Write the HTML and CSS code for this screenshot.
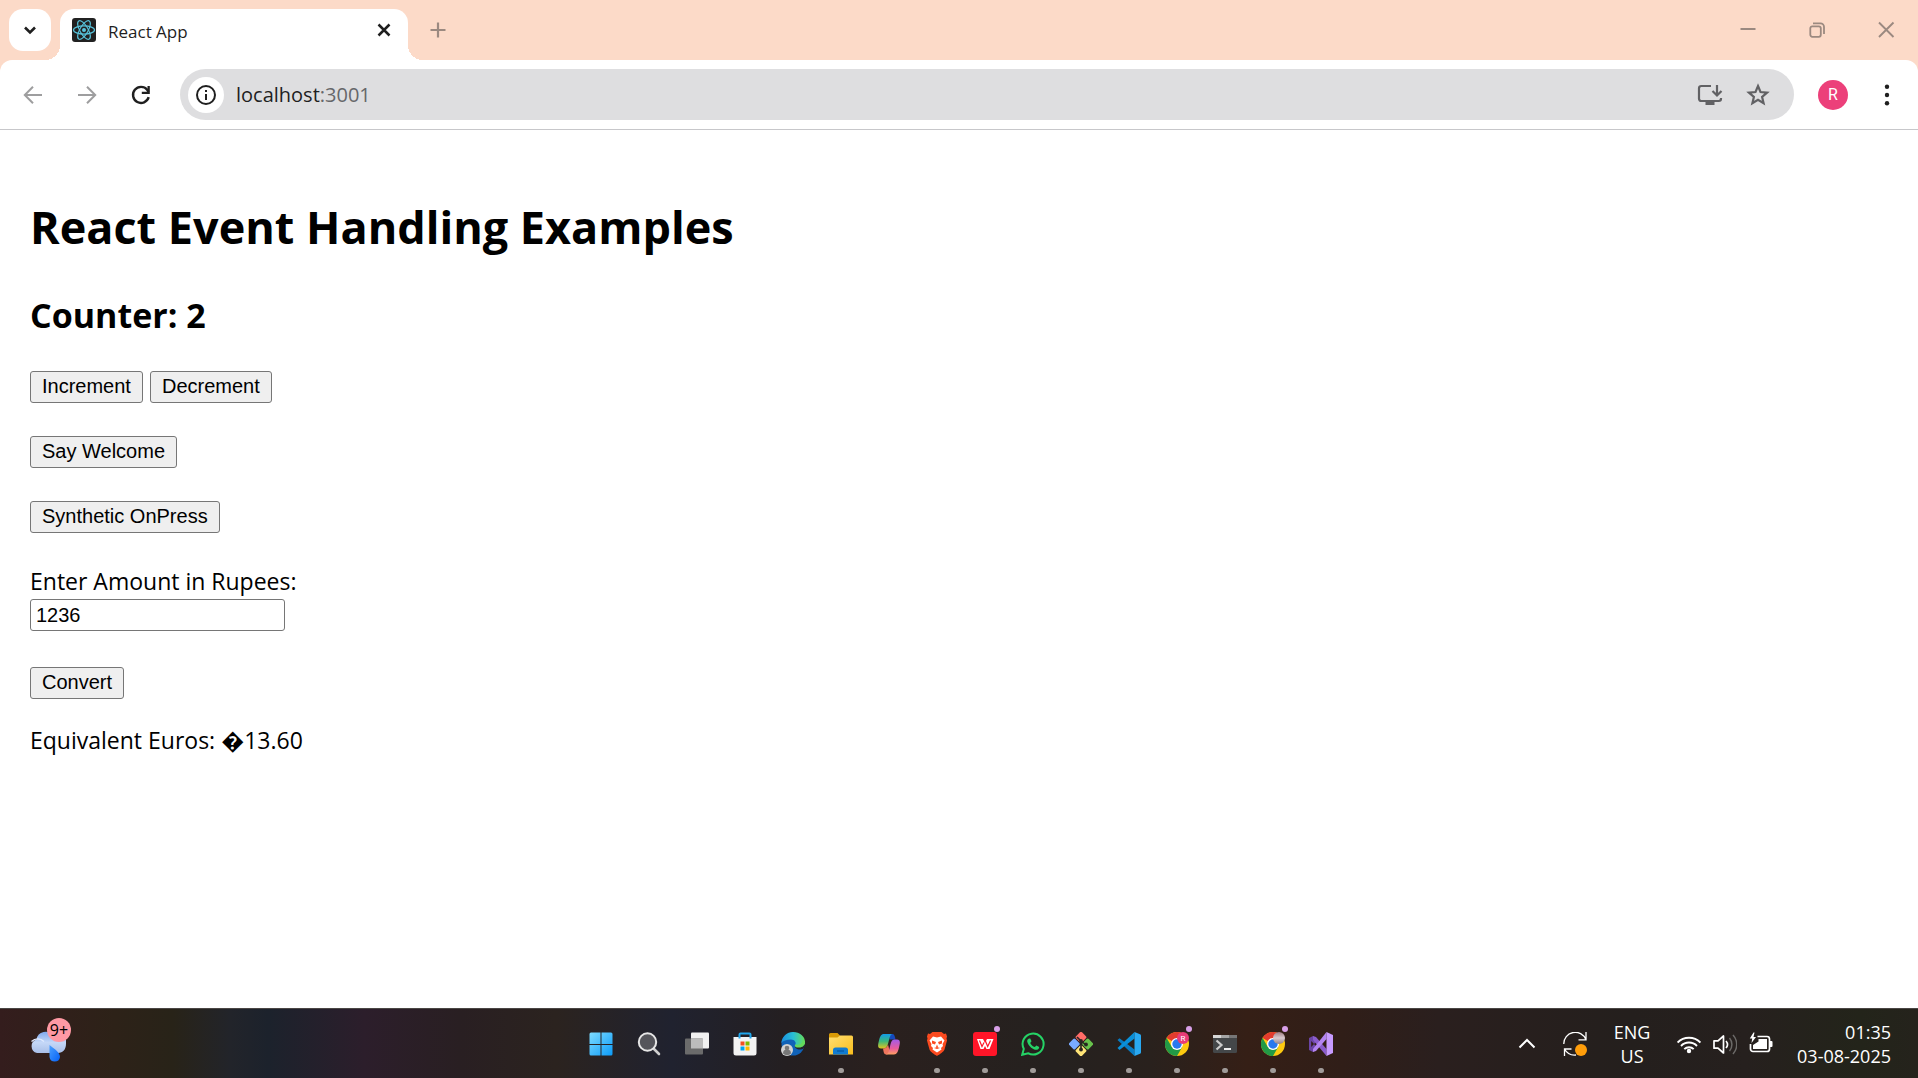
FILE: index.html
```html
<!DOCTYPE html>
<html lang="en">
<head>
<meta charset="utf-8">
<title>React App</title>
<link rel="stylesheet" href="styles.css">
</head>
<body>
<header class="browser">
  <div class="tab-strip">
    <button class="tab-search" aria-label="Search tabs">
      <svg width="24" height="24" viewBox="0 0 24 24"><path d="M7 9.500l5 5 5-5" fill="none" stroke="#1f1f1f" stroke-width="2.600"/></svg>
    </button>
    <div class="tab">
      <svg class="favicon" width="24" height="24" viewBox="0 0 24 24">
        <rect width="24" height="24" rx="3" fill="#212121"/>
        <g fill="none" stroke="#58c4dc" stroke-width="1.200">
          <ellipse cx="12" cy="12" rx="10.500" ry="4.100"/>
          <ellipse cx="12" cy="12" rx="10.500" ry="4.100" transform="rotate(60 12 12)"/>
          <ellipse cx="12" cy="12" rx="10.500" ry="4.100" transform="rotate(120 12 12)"/>
        </g>
        <circle cx="12" cy="12" r="2" fill="#58c4dc"/>
      </svg>
      <span class="tab-title">React App</span>
      <button class="tab-close" aria-label="Close tab">
        <svg width="24" height="24" viewBox="0 0 24 24"><path d="M6.500 6.500l11 11M17.500 6.500l-11 11" stroke="#1f1f1f" stroke-width="2.500"/></svg>
      </button>
    </div>
    <button class="new-tab" aria-label="New tab">
      <svg width="24" height="24" viewBox="0 0 24 24"><path d="M12 4.500v15M4.500 12h15" stroke="#9b8980" stroke-width="2.200"/></svg>
    </button>
    <div class="window-controls">
      <button aria-label="Minimize"><svg width="24" height="24" viewBox="0 0 24 24"><path d="M4.500 11h15" stroke="#9b8980" stroke-width="2"/></svg></button>
      <button aria-label="Restore"><svg width="24" height="24" viewBox="0 0 24 24" fill="none" stroke="#9b8980" stroke-width="1.800"><rect x="5.300" y="8.300" width="10.500" height="10.500" rx="2"/><path d="M8 5.300h7.500a3.500 3.500 0 0 1 3.500 3.500V16"/></svg></button>
      <button aria-label="Close"><svg width="24" height="24" viewBox="0 0 24 24"><path d="M5 4.500l14.500 14.500M19.500 4.500L5 19" stroke="#9b8980" stroke-width="1.900"/></svg></button>
    </div>
  </div>
  <div class="toolbar">
    <button class="nav-button" aria-label="Back"><svg width="24" height="24" viewBox="0 0 24 24"><path d="M21 12H4.500M12 3.800L3.800 12l8.200 8.200" fill="none" stroke="#9e9e9f" stroke-width="2"/></svg></button>
    <button class="nav-button" aria-label="Forward"><svg width="24" height="24" viewBox="0 0 24 24"><path d="M3 12h16.500M12 3.800l8.200 8.200-8.200 8.200" fill="none" stroke="#9e9e9f" stroke-width="2"/></svg></button>
    <button class="nav-button" aria-label="Reload"><svg width="24" height="24" viewBox="0 0 24 24"><path d="M19.700 14.200A8 8 0 1 1 18.200 6.800L19.500 9" fill="none" stroke="#1f1f1f" stroke-width="2.400"/><path d="M20.800 3v8h-8V8.700h5.700V3z" fill="#1f1f1f"/></svg></button>
    <form class="omnibox">
      <button class="site-info" type="button" aria-label="Site information"><svg width="24" height="24" viewBox="0 0 24 24"><circle cx="12" cy="12" r="9" fill="none" stroke="#1f1f1f" stroke-width="2"/><path d="M11 11h2v6h-2zM11 7h2v2h-2z" fill="#1f1f1f"/></svg></button>
      <a class="url" href="#">localhost<span class="port">:3001</span></a>
      <button class="omni-action" type="button" aria-label="Install"><svg width="26" height="24" viewBox="0 0 26 24"><path d="M14 3H4.200A2.200 2.200 0 0 0 2 5.200v10.600A2.200 2.200 0 0 0 4.200 18h17.600a2.200 2.200 0 0 0 2.200-2.200V15" fill="none" stroke="#616164" stroke-width="2.200"/><path d="M8.500 18h9v4h-9z" fill="#616164"/><path d="M20 2v10M15.500 8l4.500 4.500L24.500 8" fill="none" stroke="#616164" stroke-width="2.200"/></svg></button>
      <button class="omni-action" type="button" aria-label="Bookmark"><svg width="24" height="24" viewBox="0 0 24 24"><path d="M12 3l2.500 6 6.600.6-5 4.300 1.500 6.400-5.600-3.400-5.600 3.400 1.500-6.400-5-4.300 6.600-.6z" fill="none" stroke="#616164" stroke-width="2.200"/></svg></button>
    </form>
    <button class="profile" aria-label="Profile">R</button>
    <button class="menu" aria-label="Menu"><svg width="24" height="24" viewBox="0 0 24 24" fill="#1f1f1f"><circle cx="12" cy="3.800" r="2.200"/><circle cx="12" cy="12" r="2.200"/><circle cx="12" cy="20.200" r="2.200"/></svg></button>
  </div>
</header>

<main class="page">
  <h1>React Event Handling Examples</h1>
  <h2>Counter: 2</h2>
  <div class="row">
    <button class="btn">Increment</button>
    <button class="btn">Decrement</button>
  </div>
  <div class="row"><button class="btn">Say Welcome</button></div>
  <div class="row"><button class="btn">Synthetic OnPress</button></div>
  <form class="converter">
    <label for="amount">Enter Amount in Rupees:</label>
    <input class="amount" id="amount" type="text" value="1236">
    <button class="btn convert" type="button">Convert</button>
  </form>
  <p class="result">Equivalent Euros: �13.60</p>
</main>

<footer class="taskbar">
  <button class="weather" aria-label="Weather">
    <svg width="36" height="36" viewBox="0 0 36 36">
      <defs>
        <linearGradient id="cloud" x1="0" y1="0" x2="0" y2="1"><stop offset="0" stop-color="#7fa9ee"/><stop offset=".5" stop-color="#c5d8f8"/><stop offset="1" stop-color="#a9bfe8"/></linearGradient>
        <linearGradient id="drop" x1="0" y1="0" x2="1" y2="1"><stop offset="0" stop-color="#4aa0ff"/><stop offset="1" stop-color="#0560f5"/></linearGradient>
      </defs>
      <path d="M7 27a7 7 0 0 1-.5-13.500A9 9 0 0 1 23 10a8 8 0 0 1 13 7.500c0 6-3 9.500-8 9.500z" fill="url(#cloud)"/>
      <path d="M1.500 15.500c4-3.500 9-3 12.500 0" fill="none" stroke="#e0ebff" stroke-width="1.500"/>
      <path d="M19.500 19c5 4 10.500 7.500 10.500 12a5.300 5.300 0 0 1-10.500 0z" fill="url(#drop)"/>
    </svg>
    <span class="badge">9+</span>
  </button>
  <nav class="apps">
    <button class="app" aria-label="Start"><svg width="24" height="24" viewBox="0 0 24 24"><defs><linearGradient id="win" x1="0" y1="0" x2="1" y2="1"><stop offset="0" stop-color="#7fdcff"/><stop offset="1" stop-color="#0c9bf8"/></linearGradient></defs><path fill="url(#win)" d="M2 .5h9.500v11.500H.5V2A1.500 1.500 0 0 1 2 .5zM12.500 .5H22a1.500 1.500 0 0 1 1.500 1.500v10h-11zM.5 13h11v10.500H2A1.500 1.500 0 0 1 .5 22zM12.500 13h11v9a1.500 1.500 0 0 1-1.500 1.500h-9.500z"/></svg></button>
    <button class="app" aria-label="Search"><svg width="24" height="24" viewBox="0 0 24 24"><path d="M16 16l6 6" stroke="#cfcfcf" stroke-width="2.600" stroke-linecap="round"/><circle cx="10.500" cy="10" r="8.700" fill="#55555b" stroke="#e6e6e6" stroke-width="2"/></svg></button>
    <button class="app" aria-label="Task view"><svg width="24" height="24" viewBox="0 0 24 24"><rect x="6" y=".5" width="18" height="16" rx="1" fill="#f1f1f1"/><rect y="6.500" width="18" height="16" rx="1" fill="#6b6b6b"/><path d="M6 6.500h12v10H6z" fill="#bcbcbc"/></svg></button>
    <button class="app" aria-label="Store"><svg width="24" height="24" viewBox="0 0 24 24"><path d="M.5 5h23v16a2.500 2.500 0 0 1-2.500 2.500H3A2.500 2.500 0 0 1 .5 21z" fill="#f3f3f3"/><path d="M6.500 6.500V2.500a1 1 0 0 1 1-1h9a1 1 0 0 1 1 1v4" fill="none" stroke="#20a6ec" stroke-width="2"/><path d="M7.500 9.500h4v4h-4z" fill="#f25022"/><path d="M12.500 9.500h4v4h-4z" fill="#7fba00"/><path d="M7.500 14.500h4v4h-4z" fill="#00a4ef"/><path d="M12.500 14.500h4v4h-4z" fill="#ffb900"/></svg></button>
    <button class="app" aria-label="Edge"><svg width="24" height="24" viewBox="0 0 24 24"><defs><linearGradient id="edge"><stop offset="0" stop-color="#1a8fe0"/><stop offset=".5" stop-color="#28bfd6"/><stop offset="1" stop-color="#66dd55"/></linearGradient></defs><circle cx="12" cy="12" r="11.500" fill="#1062b8"/><path d="M.3 11C1 4.500 6 0 12 0c7 0 12 4.500 12 10 0 4-3 6-6.500 6-2.500 0-4-1-3.500-2.500 2-3-.5-6-4-6C5.500 7.500 1.800 9 .3 11z" fill="url(#edge)"/><path d="M14 13.500c-.5 2 1.500 4 5 4 1.500 0 2.500-.3 3.300-.7L24 14v-2h-3.500c-1 2-4 3-6.500 1.500z" fill="#22232c"/><path d="M24 9c1 5-4 7-8 6.500-2-.5-2.500-1.500-2-3 3 1 7 0 8-4z" fill="#62d95c"/><circle cx="6" cy="18" r="6" fill="#d2d2d2"/><circle cx="6" cy="16" r="2.300" fill="#777"/><path d="M2 21.500a4 4 0 0 1 8 0 5.500 5.500 0 0 1-8 0z" fill="#777"/></svg></button>
    <button class="app running" aria-label="File Explorer"><svg width="24" height="24" viewBox="0 0 24 24"><defs><linearGradient id="folder" x1="0" y1="0" x2="1" y2="1"><stop offset="0" stop-color="#ffdf73"/><stop offset="1" stop-color="#f9bd1c"/></linearGradient></defs><path d="M0 7V2.500A1.500 1.500 0 0 1 1.500 1h7L11 3.500V7z" fill="#d99a06"/><path d="M0 5.500h8.500L11 3.500h11.500A1.500 1.500 0 0 1 24 5v17.500H0z" fill="url(#folder)"/><path d="M4 22.500V18a2.500 2.500 0 0 1 2.500-2.500h10A2.500 2.500 0 0 1 19 18v4.500z" fill="#117bd0"/><path d="M8 19h7" stroke="#075da8" stroke-width="1.500"/></svg></button>
    <button class="app" aria-label="Copilot"><svg width="24" height="24" viewBox="0 0 24 24"><defs><linearGradient id="cpl" x1="0" y1="0" x2="0" y2="1"><stop offset="0" stop-color="#129bea"/><stop offset=".5" stop-color="#3ab87b"/><stop offset="1" stop-color="#e2c51d"/></linearGradient><linearGradient id="cpr" x1="0" y1="0" x2="0" y2="1"><stop offset="0" stop-color="#a35be8"/><stop offset=".6" stop-color="#e95c9c"/><stop offset="1" stop-color="#ffa060"/></linearGradient></defs><path d="M13 2h2.500c1.500 0 2.500 2 3 5.500h-6z" fill="#1549bd"/><path d="M7 2h8c-2 1-2.500 4-3.500 8-1 4-2 6.500-5 6.500H4c-4 0-3-4-2-8S4 2 7 2z" fill="url(#cpl)"/><path d="M6 16.500c3 0 4-1.500 5-4l2 8-3 2H9c-2 0-2.500-3-3-6z" fill="#ef765d"/><path d="M17.500 7.500H20c4 0 3 4 2 8s-2 7-5 7H9c2.500-1 3-4 4-8s1.500-7 4.500-7z" fill="url(#cpr)"/></svg></button>
    <button class="app running" aria-label="Brave"><svg width="24" height="24" viewBox="0 0 24 24"><path d="M7.500 0h9l2.500 2 2-.5 1 3-.5 2 .5 2-2.500 9c-.5 2-5 5-7.500 6.500-2.500-1.500-7-4.500-7.500-6.500L2 8.500l.5-2-.5-2 1-3 2 .5z" fill="#fb4a1f"/><path d="M8 4.500l4 1 4-1 3.500 4-2 3.500.5 2-2 2 .5 1.500L12 20.500l-4.500-3L8 16l-2-2 .5-2-2-3.500z" fill="#fff"/><path d="M7 8.500l4 1.500-1 2.500-3-1zM17 8.500l-4 1.500 1 2.500 3-1zM12 12.500l1 2.500-1 1-1-1zM9 16l3-1 3 1-3 1z" fill="#fb4a1f"/></svg></button>
    <button class="app running notify" aria-label="WPS Office"><svg width="24" height="24" viewBox="0 0 24 24"><rect width="24" height="24" rx="3" fill="#ff1528"/><path d="M4 7h6l2 4 2-4h6.500l-4 10h-3L12 14l-1.500 3h-3z" fill="#fff"/><path d="M6.500 8.500l2.500 6 2-4M12 8l2.700 6.500L17.500 8.500" fill="none" stroke="#ff1528" stroke-width="1.200"/></svg></button>
    <button class="app running" aria-label="WhatsApp"><svg width="24" height="24" viewBox="0 0 24 24"><path d="M1.200 22.800l1.600-5.900A10.500 10.500 0 1 1 7 21.200z" fill="none" stroke="#25d366" stroke-width="2"/><path d="M8 6.500c-1 .4-2 1.500-1.800 3 .3 2 2 4.500 4 6.200 2 1.500 4.300 2.500 6 2 1.300-.4 2-1.500 2-2.700l-2.800-1.500-1.600 1.600c-2-.7-3.800-2.300-4.600-4.200l1.300-1.600L9.300 6.500z" fill="#25d366"/></svg></button>
    <button class="app running" aria-label="Git Bash"><svg width="24" height="24" viewBox="0 0 24 24"><g transform="rotate(45 12 12)"><rect x="3" y="3" width="8.500" height="8.500" rx="1.500" fill="#ff6c67"/><rect x="12.500" y="3" width="8.500" height="8.500" rx="1.500" fill="#68c24c"/><rect x="3" y="12.500" width="8.500" height="8.500" rx="1.500" fill="#78aaff"/><rect x="12.500" y="12.500" width="8.500" height="8.500" rx="1.500" fill="#ffe477"/></g><path d="M8 5l4 4v9M12 9l5 4" fill="none" stroke="#292522" stroke-width="1.600"/><g fill="#292522"><circle cx="12" cy="9" r="1.900"/><circle cx="12" cy="17.500" r="1.900"/><circle cx="17" cy="12.500" r="1.900"/></g></svg></button>
    <button class="app running" aria-label="Visual Studio Code"><svg width="24" height="24" viewBox="0 0 24 24"><path d="M.5 8l2-1.800L17.500 17.500V24z" fill="#087cc4"/><path d="M17.500 0v6.500L2.500 18 .5 16z" fill="#0a90d9"/><path d="M17.500 0L23 2.300a1.500 1.500 0 0 1 1 1.400v16.600a1.500 1.500 0 0 1-1 1.400L17.500 24z" fill="#29a9f2"/></svg></button>
    <button class="app running notify" aria-label="Chrome, profile R"><svg width="24" height="24" viewBox="0 0 24 24"><circle cx="12" cy="12" r="12" fill="#fdca10"/><path d="M12 12L1.600 6A12 12 0 0 1 22.400 6H12z" fill="#e33b2e"/><path d="M1.600 6A12 12 0 0 0 12 24l5.200-9L12 12 6.800 15z" fill="#229a46"/><circle cx="12" cy="12" r="6" fill="#fff"/><circle cx="12" cy="12" r="4.700" fill="#2879ee"/><circle cx="18" cy="6" r="6" fill="#e83b78"/><text class="chrome-letter" x="18" y="9" text-anchor="middle">R</text></svg></button>
    <button class="app running" aria-label="Terminal"><svg width="24" height="24" viewBox="0 0 24 24"><path d="M0 3h24v16.500A1.500 1.500 0 0 1 22.500 21h-21A1.500 1.500 0 0 1 0 19.500z" fill="#444749"/><path d="M0 3h8v3H0z" fill="#d7d7d7"/><path d="M8 3h8v3H8z" fill="#a5a5a5"/><path d="M16 3h8v3h-8z" fill="#777"/><path d="M3.500 8.500l5 4.500-5 4.500" fill="none" stroke="#ccc" stroke-width="2.200"/><path d="M11 17h7" stroke="#eee" stroke-width="2"/></svg></button>
    <button class="app running notify" aria-label="Chrome"><svg width="24" height="24" viewBox="0 0 24 24"><defs><linearGradient id="photo" x1="0" y1="0" x2="0" y2="1"><stop offset="0" stop-color="#a07c84"/><stop offset=".5" stop-color="#d9cace"/><stop offset="1" stop-color="#92828a"/></linearGradient></defs><circle cx="12" cy="12" r="12" fill="#fdca10"/><path d="M12 12L1.600 6A12 12 0 0 1 22.400 6H12z" fill="#e33b2e"/><path d="M1.600 6A12 12 0 0 0 12 24l5.200-9L12 12 6.800 15z" fill="#229a46"/><circle cx="12" cy="12" r="6" fill="#fff"/><circle cx="12" cy="12" r="4.700" fill="#2879ee"/><circle cx="18" cy="6" r="6" fill="url(#photo)"/></svg></button>
    <button class="app running" aria-label="Visual Studio"><svg width="24" height="24" viewBox="0 0 24 24"><path fill-rule="evenodd" d="M0 6l4-2 4.500 4.500L5 12l3.500 3.500L4 20l-4-2zM2.200 9v6l2.800-3z" fill="#6b45a5"/><path d="M4 4l3 1 10.500 12V24L4 8z" fill="#8a5ccb"/><path d="M17.500 0v7L7 19l-3 1v-3z" fill="#b384f0"/><path d="M17.500 0L24 3v18l-6.500 3z" fill="#c79bff"/></svg></button>
  </nav>
  <div class="tray">
    <button class="tray-button" aria-label="Show hidden icons"><svg width="24" height="24" viewBox="0 0 24 24"><path d="M4.500 15.500L12 8l7.500 7.500" fill="none" stroke="#fff" stroke-width="2"/></svg></button>
    <button class="tray-button" aria-label="Updates"><svg width="24" height="24" viewBox="0 0 24 24"><g fill="none" stroke="#fff" stroke-width="1.300"><path d="M.8 12A11.400 11.400 0 0 1 22.800 7.500M23 0v7.800h-7.500M1.500 24v-7h7M1.500 17c2.500 4.500 7 6.500 11.500 6"/></g><circle cx="18" cy="18" r="6" fill="#ff9d0a"/></svg></button>
    <button class="language">ENG<br>US</button>
    <button class="system" aria-label="Network, volume and battery">
      <svg width="24" height="24" viewBox="0 0 24 24"><g fill="none" stroke="#fff" stroke-width="1.900"><path d="M.6 10.500a16 16 0 0 1 22.800 0M4 14a11 11 0 0 1 16 0M7.300 17.200a6.500 6.500 0 0 1 9.400 0"/></g><circle cx="12" cy="19" r="2.200" fill="#fff"/></svg>
      <svg width="24" height="24" viewBox="0 0 24 24"><path d="M1 8.800h4L10.500 4v17L5 16.200H1z" fill="none" stroke="#fff" stroke-width="1.700" stroke-linejoin="round"/><path d="M13 9c1.700 2 1.700 5 0 7" fill="none" stroke="#fff" stroke-width="1.600"/><path d="M16.500 6c3.200 3.700 3.200 9.300 0 13M20 3c5 5.500 5 13.500 0 19" fill="none" stroke="#6c6a68" stroke-width="1.500"/></svg>
      <svg width="24" height="24" viewBox="0 0 24 24"><path d="M8.500 4.500H18A2.500 2.500 0 0 1 20.500 7v10A2.500 2.500 0 0 1 18 19.500H4A2.500 2.500 0 0 1 1.500 17v-5" fill="none" stroke="#fff" stroke-width="1.700"/><path d="M9.500 7H18v10H4v-4l5.500-3.500z" fill="#fff"/><path d="M21 9h1.500a1 1 0 0 1 1 1v4a1 1 0 0 1-1 1H21z" fill="#fff"/><path d="M4.500 .5L.8 6.500h2.400L2.500 11 7 5H4.500l1-4.500z" fill="#fff"/></svg>
    </button>
    <button class="clock">01:35<br>03-08-2025</button>
  </div>
</footer>
</body>
</html>
```
FILE: styles.css
```css
* { box-sizing: border-box; }

body {
  margin: 0;
  min-height: 100vh;
  display: flex;
  flex-direction: column;
  background: #fff;
  color: #000;
  font-family: "Open Sans", "Noto Sans", sans-serif;
}

button {
  margin: 0;
  padding: 0;
  border: 0;
  background: none;
  color: inherit;
  font: inherit;
}

svg { display: block; }

/* Browser frame */
.browser { background: #fcdac8; }

.tab-strip {
  display: flex;
  align-items: center;
  height: 60px;
  padding-left: 9px;
}

.tab-search {
  display: grid;
  place-items: center;
  width: 42px;
  height: 42px;
  border-radius: 14px;
  background: #fff;
}

.tab {
  position: relative;
  align-self: flex-end;
  display: flex;
  align-items: center;
  width: 348px;
  height: 51px;
  margin-left: 9px;
  padding: 0 18px 9px 12px;
  border-radius: 14px 14px 0 0;
  background: #fff;
}

.tab::before,
.tab::after {
  content: "";
  position: absolute;
  bottom: 0;
  width: 15px;
  height: 15px;
}

.tab::before {
  right: 100%;
  background: radial-gradient(circle at 0 0, transparent 15px, #fff 15px);
}

.tab::after {
  left: 100%;
  background: radial-gradient(circle at 100% 0, transparent 15px, #fff 15px);
}

.tab-title {
  flex: 1;
  padding: 4px 0 0 12px;
  font-size: 17px;
  line-height: 24px;
  color: #1f1f1f;
}

.tab-close { margin-right: -6px; }

.new-tab { margin-left: 18px; }

.window-controls {
  display: flex;
  gap: 4px;
  margin-left: auto;
}

.window-controls button {
  display: grid;
  place-items: center;
  width: 65px;
  height: 60px;
}

.toolbar {
  display: flex;
  align-items: center;
  height: 70px;
  padding: 0 10px 0 6px;
  border-bottom: 1px solid #c7c7ca;
  border-radius: 12px 12px 0 0;
  background: #fff;
}

.nav-button {
  display: grid;
  place-items: center;
  width: 54px;
  height: 48px;
}

.omnibox {
  flex: 1;
  display: flex;
  align-items: center;
  height: 51px;
  margin-left: 12px;
  padding: 0 24px 0 8px;
  border-radius: 26px;
  background: #dedee0;
}

.site-info {
  display: grid;
  place-items: center;
  width: 36px;
  height: 36px;
  border-radius: 50%;
  background: #fff;
}

.url {
  flex: 1;
  padding-left: 12px;
  font-size: 20px;
  line-height: 28px;
  color: #1f1f1f;
  text-decoration: none;
}

.port { color: #66676a; }

.omni-action { margin-left: 23px; }

.profile {
  width: 30px;
  height: 30px;
  margin-left: 24px;
  border-radius: 50%;
  background: #ec407a;
  color: #fff;
  font-family: Roboto, sans-serif;
  font-size: 16px;
  line-height: 30px;
}

.menu {
  display: grid;
  place-items: center;
  width: 42px;
  height: 42px;
  margin-left: 18px;
}

/* Page content */
.page {
  flex: 1;
  padding: 65px 30px 30px;
  font-size: 23px;
  line-height: 32px;
}

h1 {
  margin: 0 0 32px;
  font-size: 45px;
  line-height: 64px;
}

h2 {
  margin: 0 0 32px;
  font-size: 34px;
  line-height: 48px;
}

.row {
  display: flex;
  gap: 7px;
  margin-bottom: 33px;
}

.btn {
  height: 32px;
  padding: 0 11px 2px;
  border: 1px solid #767676;
  border-radius: 3px;
  background: #efefef;
  color: #000;
  font-family: "Liberation Sans", Arial, sans-serif;
  font-size: 20px;
  line-height: 28px;
}

.converter {
  display: flex;
  flex-direction: column;
  align-items: flex-start;
}

.converter label {
  margin-bottom: 3px;
  line-height: 30px;
}

.amount {
  width: 255px;
  height: 32px;
  padding: 0 5px;
  border: 1px solid #767676;
  border-radius: 3px;
  background: #fff;
  color: #000;
  font-family: "Liberation Sans", Arial, sans-serif;
  font-size: 20px;
}

.convert { margin-top: 36px; }

.result { margin: 25px 0 0; }

/* Taskbar */
.taskbar {
  display: grid;
  grid-template-columns: 1fr auto 1fr;
  align-items: center;
  height: 70px;
  border-top: 1px solid #4a4644;
  background: linear-gradient(90deg, #341d1d 0%, #2d2218 6%, #282318 9%, #22242a 12%, #1c222c 14%, #2c1e2b 19%, #291f22 24%, #2b231f 29%, #20222f 35%, #241f21 41%, #2a201e 46%, #25211f 55%, #29211d 60%, #351f16 65%, #301e18 70%, #2a1f1e 75%, #241f1d 85%, #26201e 91%, #23241a 97%, #25231c 100%);
  color: #fff;
}

.weather {
  position: relative;
  justify-self: start;
  margin-left: 30px;
}

.badge {
  position: absolute;
  top: -8px;
  left: 17px;
  width: 24px;
  height: 24px;
  border-radius: 50%;
  background: #ff99a4;
  color: #000;
  font-size: 16px;
  line-height: 24px;
}

.apps {
  display: flex;
  padding-left: 3px;
}

.app {
  position: relative;
  display: grid;
  place-items: center;
  width: 48px;
  height: 69px;
}

.running::after {
  content: "";
  position: absolute;
  bottom: 5px;
  left: 21px;
  width: 6px;
  height: 5px;
  border-radius: 3px;
  background: #a09b99;
}

.notify::before {
  content: "";
  position: absolute;
  top: 17px;
  right: 9px;
  width: 6px;
  height: 6px;
  border-radius: 50%;
  background: #d8a0e8;
}

.chrome-letter {
  fill: #fff;
  font-family: Roboto, sans-serif;
  font-size: 8px;
}

.tray {
  display: flex;
  align-items: center;
  justify-content: flex-end;
  padding-right: 27px;
  font-size: 18px;
  line-height: 24px;
}

.tray-button {
  display: grid;
  place-items: center;
  width: 48px;
  height: 48px;
}

.language {
  width: 66px;
  text-align: center;
}

.system {
  display: flex;
  gap: 12px;
  margin-left: 12px;
}

.clock {
  margin-left: 24px;
  text-align: right;
}
```
